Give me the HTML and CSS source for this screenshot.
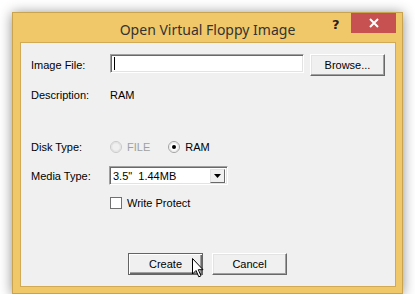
FILE: index.html
```html
<!DOCTYPE html>
<html lang="en">
<head>
  <meta charset="UTF-8" />
  <title>Open Virtual Floppy Image</title>
  <link rel="stylesheet" href="styles.css">
</head>
<body>
  <div class="window">
    <div class="titlebar">
      <span class="title">Open Virtual Floppy Image</span>
      <span class="help">?</span>
      <span class="close">
        <svg width="12" height="12" viewBox="0 0 12 12"><path d="M2 2 L10 10 M10 2 L2 10" stroke="#fff" stroke-width="2"/></svg>
      </span>
    </div>

    <div class="client">
      <div class="row first">
        <span class="label">Image File:</span>
        <div class="textbox"><span class="caret"></span></div>
        <button class="btn browse">Browse...</button>
      </div>

      <div class="row desc">
        <span class="label">Description:</span>
        <span>RAM</span>
      </div>

      <div class="row disk">
        <span class="label">Disk Type:</span>
        <span class="radio disabled">
          <svg width="12" height="12" viewBox="0 0 12 12">
            <circle cx="6" cy="6" r="5.5" fill="#f0f0f0" stroke="#c8c8c8"/>
            <circle cx="6" cy="6" r="4.3" fill="#f0f0f0" stroke="#e0e0e0"/>
          </svg>
          FILE
        </span>
        <span class="radio">
          <svg width="12" height="12" viewBox="0 0 12 12">
            <circle cx="6" cy="6" r="5.5" fill="#fff" stroke="#a0a0a0"/>
            <circle cx="6" cy="6" r="4.3" fill="#fff" stroke="#e3e3e3"/>
            <circle cx="6" cy="6" r="2" fill="#000"/>
          </svg>
          RAM
        </span>
      </div>

      <div class="row media">
        <span class="label">Media Type:</span>
        <div class="select">
          <span class="value">3.5"&nbsp; 1.44MB</span>
          <span class="drop">
            <svg width="7" height="4" viewBox="0 0 7 4"><path d="M0 0 H7 L3.5 4 Z" fill="#000"/></svg>
          </span>
        </div>
      </div>

      <div class="row check">
        <span class="box"></span>
        <span>Write Protect</span>
      </div>

      <div class="actions">
        <button class="btn default">Create</button>
        <button class="btn">Cancel</button>
        <svg class="cursor" width="13" height="20" viewBox="0 0 13 20">
          <path d="M0.5 0.5 V16 L4 12.5 L6.8 18.8 L9 17.8 L6.3 11.7 H11 Z" fill="#fff" stroke="#000" stroke-width="1"/>
        </svg>
      </div>
    </div>
  </div>
</body>
</html>
```

FILE: styles.css
```css
body {
  margin: 0;
  background: #fff;
  font-family: "Liberation Sans", Arial, sans-serif;
  font-size: 11px;
  color: #000;
}

.window {
  margin: 12px 0 0 12px;
  width: 391px;
  height: 282px;
  box-sizing: border-box;
  background: #f0c869;
  border: 1px solid #c9a450;
  box-shadow: 0 1px 12px rgba(0, 0, 0, 0.45);
  display: flex;
  flex-direction: column;
}

.titlebar {
  height: 29px;
  position: relative;
  display: flex;
  align-items: center;
  justify-content: center;
  flex-shrink: 0;
}

.title {
  font-family: "Noto Sans", "Open Sans", sans-serif;
  font-size: 14px;
  color: #333;
  margin-left: 0;
  margin-top: 3px;
}

.help {
  position: absolute;
  left: 319px;
  top: 4px;
  font-family: "DejaVu Sans", sans-serif;
  font-weight: bold;
  font-size: 13px;
  color: #222;
}

.close {
  position: absolute;
  left: 338px;
  top: 0;
  width: 45px;
  height: 20px;
  background: #c75050;
  display: flex;
  align-items: center;
  justify-content: center;
}

.client {
  margin: 0 6px 0 7px;
  height: 245px;
  background: #f0f0f0;
  border: 1px solid #d0aa55;
  box-sizing: border-box;
  padding: 11px 0 0 10px;
  display: flex;
  flex-direction: column;
  position: relative;
}

.row {
  display: flex;
  align-items: center;
}

.label {
  width: 79px;
  flex-shrink: 0;
}

.first {
  height: 22px;
}

.textbox {
  width: 194px;
  height: 19px;
  box-sizing: border-box;
  background: #fff;
  border: 1px solid;
  border-color: #a0a0a0 #fff #fff #a0a0a0;
  box-shadow: inset 1px 1px #696969, inset -1px -1px #e3e3e3;
  align-self: flex-start;
  display: flex;
  align-items: center;
  padding-left: 3px;
}

.caret {
  width: 1px;
  height: 13px;
  background: #000;
}

.btn {
  font-family: "Liberation Sans", Arial, sans-serif;
  font-size: 11px;
  color: #000;
  background: #f0f0f0;
  width: 75px;
  height: 22px;
  padding: 0;
  border: 1px solid;
  border-color: #fff #696969 #696969 #fff;
  box-shadow: inset -1px -1px #a0a0a0, inset 1px 1px #e3e3e3;
}

.browse {
  margin-left: 6px;
}

.desc {
  margin-top: 13px;
}

.disk {
  margin-top: 40px;
}

.radio {
  display: flex;
  align-items: center;
  gap: 5px;
  margin-right: 18px;
}

.radio.disabled {
  color: #a0a0a0;
}

.media {
  margin-top: 13px;
}

.select {
  width: 119px;
  height: 19px;
  box-sizing: border-box;
  margin-left: -1px;
  background: #fff;
  border: 1px solid;
  border-color: #a0a0a0 #fff #fff #a0a0a0;
  box-shadow: inset 1px 1px #696969, inset -1px -1px #e3e3e3;
  display: flex;
  align-items: center;
  padding: 2px;
}

.value {
  flex: 1;
  padding-left: 1px;
}

.drop {
  width: 15px;
  height: 14px;
  box-sizing: border-box;
  background: #f0f0f0;
  border: 1px solid;
  border-color: #e3e3e3 #696969 #696969 #e3e3e3;
  display: flex;
  align-items: center;
  justify-content: center;
}

.check {
  margin-top: 12px;
  padding-left: 79px;
  gap: 5px;
}

.box {
  width: 12px;
  height: 12px;
  box-sizing: border-box;
  background: #fff;
  border: 1px solid #707070;
}

.actions {
  margin-top: 44px;
  padding-left: 97px;
  display: flex;
  gap: 9px;
  position: relative;
}

.default {
  border: 1px solid #646464;
  box-shadow: inset 1px 1px #fff, inset -1px -1px #696969, inset -2px -2px #a0a0a0;
}

.cursor {
  position: absolute;
  left: 161px;
  top: 5px;
}
```
